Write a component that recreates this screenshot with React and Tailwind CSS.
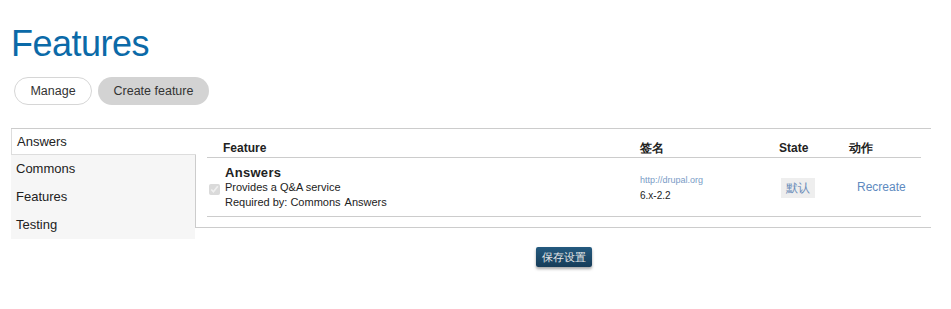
import React from 'react';

const tabs = ['Answers', 'Commons', 'Features', 'Testing'];

export default function App() {
  return (
    <div className="w-[951px] h-[309px] bg-white text-[#222] font-['Liberation_Sans',Arial,sans-serif]">
      <div className="pt-[22px] pl-[11px]">
        <h1 className="text-[36px] leading-[44px] text-[#0b6aa8] tracking-[-0.5px]">Features</h1>
        <div className="flex gap-[6px] mt-[11px] ml-[3px]">
          <button className="h-[28px] w-[78px] rounded-full border border-[#d6d6d6] bg-white text-[12.5px] text-[#333]">Manage</button>
          <button className="h-[28px] w-[111px] rounded-full bg-[#d3d3d3] text-[12.5px] text-[#333]">Create feature</button>
        </div>
      </div>

      <div className="mt-[23px] ml-[11px] w-[920px] flex items-start border-t border-[#ccc]">
        <ul className="w-[184px] bg-[#f6f6f6] text-[13px]">
          {tabs.map((t, i) => (
            <li
              key={t}
              className={
                i === 0
                  ? 'relative z-10 h-[26px] -mr-px pl-[5px] flex items-center bg-white border-l border-b border-[#ddd]'
                  : 'h-[28px] pl-[5px] flex items-center'
              }
            >
              {t}
            </li>
          ))}
        </ul>

        <div className="flex-1 h-[99px] border-l border-b border-[#ccc] pl-[11px] pr-[10px] pt-[10px]">
          <div className="grid grid-cols-[16px_417px_139px_70px_1fr] border-b border-[#ccc] h-[19px] text-[12px] font-bold">
            <div />
            <div>Feature</div>
            <div>签名</div>
            <div>State</div>
            <div>动作</div>
          </div>
          <div className="grid grid-cols-[18px_415px_139px_70px_1fr] items-center h-[59px] border-b border-[#ccc]">
            <div className="flex items-center h-full pt-[5px] pl-[2px]">
              <input type="checkbox" checked disabled readOnly className="w-[11px] h-[11px] accent-[#bbb] opacity-80" />
            </div>
            <div className="leading-[15px]">
              <div className="text-[13px] font-bold tracking-[0.3px]">Answers</div>
              <div className="text-[11px]">Provides a Q&amp;A service</div>
              <div className="text-[11px]">Required by: Commons<span className="ml-[4px]">Answers</span></div>
            </div>
            <div className="leading-[15px] pt-[1px]">
              <div className="text-[9px] text-[#7a9cc6]">http://drupal.org</div>
              <div className="text-[10px]">6.x-2.2</div>
            </div>
            <div>
              <span className="inline-block ml-[2px] px-[5px] h-[20px] leading-[20px] bg-[#eeeeee] text-[12px] text-[#6a8cb8]">默认</span>
            </div>
            <div className="pl-[8px] text-[12px] text-[#5e8ac0]">Recreate</div>
          </div>
        </div>
      </div>

      <div className="flex justify-center mt-[8px] pl-[176px]">
        <button className="h-[20px] px-[6px] rounded-[2px] bg-gradient-to-b from-[#245a7f] to-[#173d59] text-[11px] text-[#e6e6e6] shadow-[0_2px_3px_rgba(0,0,0,0.35)]">保存设置</button>
      </div>
    </div>
  );
}
